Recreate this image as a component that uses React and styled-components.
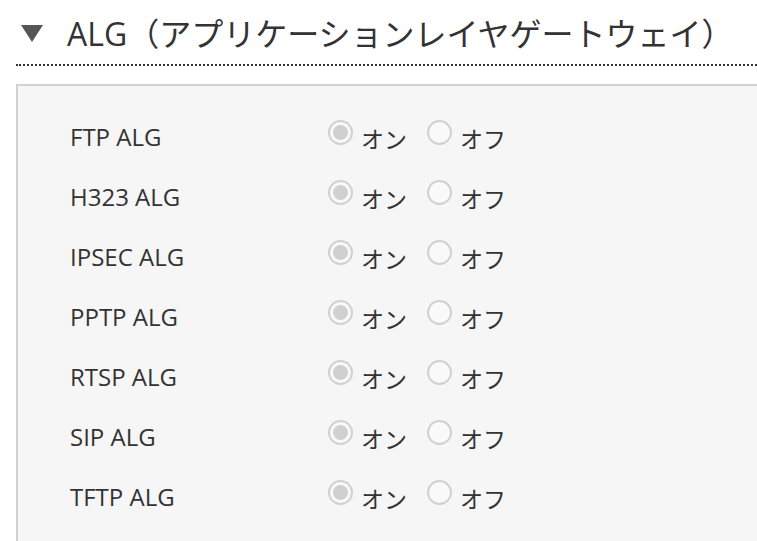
import styled, { createGlobalStyle } from "styled-components"

const rows = ["FTP ALG", "H323 ALG", "IPSEC ALG", "PPTP ALG", "RTSP ALG", "SIP ALG", "TFTP ALG"]

export default function App() {
  return (
    <>
      <GlobalStyle />
      <Page>
        <Heading>
          <Triangle />
          <Title>ALG（アプリケーションレイヤゲートウェイ）</Title>
        </Heading>
        <Panel>
          {rows.map((name) => (
            <Row key={name}>
              <Label>{name}</Label>
              <Choice>
                <Radio checked />
                <span>オン</span>
              </Choice>
              <Choice>
                <Radio />
                <span>オフ</span>
              </Choice>
            </Row>
          ))}
        </Panel>
      </Page>
    </>
  )
}

const GlobalStyle = createGlobalStyle`
  html, body {
    margin: 0;
    padding: 0;
    overflow: hidden;
    background: #fff;
  }
  body {
    font-family: "Open Sans", "Noto Sans CJK JP", sans-serif;
    color: #333;
  }
`

const Page = styled.div`
  width: 760px;
  padding-left: 16px;
  box-sizing: border-box;
`

const Heading = styled.div`
  display: flex;
  align-items: center;
  height: 64px;
  border-bottom: 2px dotted #333;
`

const Triangle = styled.span`
  width: 0;
  height: 0;
  margin-left: 5px;
  margin-right: 24px;
  margin-top: 2px;
  border-left: 11px solid transparent;
  border-right: 11px solid transparent;
  border-top: 17px solid #555;
`

const Title = styled.h2`
  margin: 0;
  font-size: 32px;
  font-weight: 400;
  color: #333;
  letter-spacing: 0;
`

const Panel = styled.div`
  margin-top: 18px;
  padding: 20px 0 20px 52px;
  background: #f6f6f6;
  border: 2px solid #d2d2d2;
  border-right: none;
`

const Row = styled.div`
  display: flex;
  align-items: center;
  height: 60px;
  font-size: 24px;
`

const Label = styled.div`
  width: 258px;
`

const Choice = styled.label`
  display: flex;
  align-items: center;
  gap: 8px;
  margin-right: 20px;
  font-size: 23px;
  span {
    margin-top: 4px;
  }
`

const Radio = styled.span`
  position: relative;
  width: 25px;
  height: 25px;
  box-sizing: border-box;
  border-radius: 50%;
  border: 2px solid #d0d0d0;
  background: #f9f9f9;
  margin-bottom: 12px;
  &::after {
    content: "";
    display: ${({ checked }) => (checked ? "block" : "none")};
    position: absolute;
    left: 3px;
    top: 3px;
    width: 15px;
    height: 15px;
    border-radius: 50%;
    background: #d0d0d0;
  }
`
